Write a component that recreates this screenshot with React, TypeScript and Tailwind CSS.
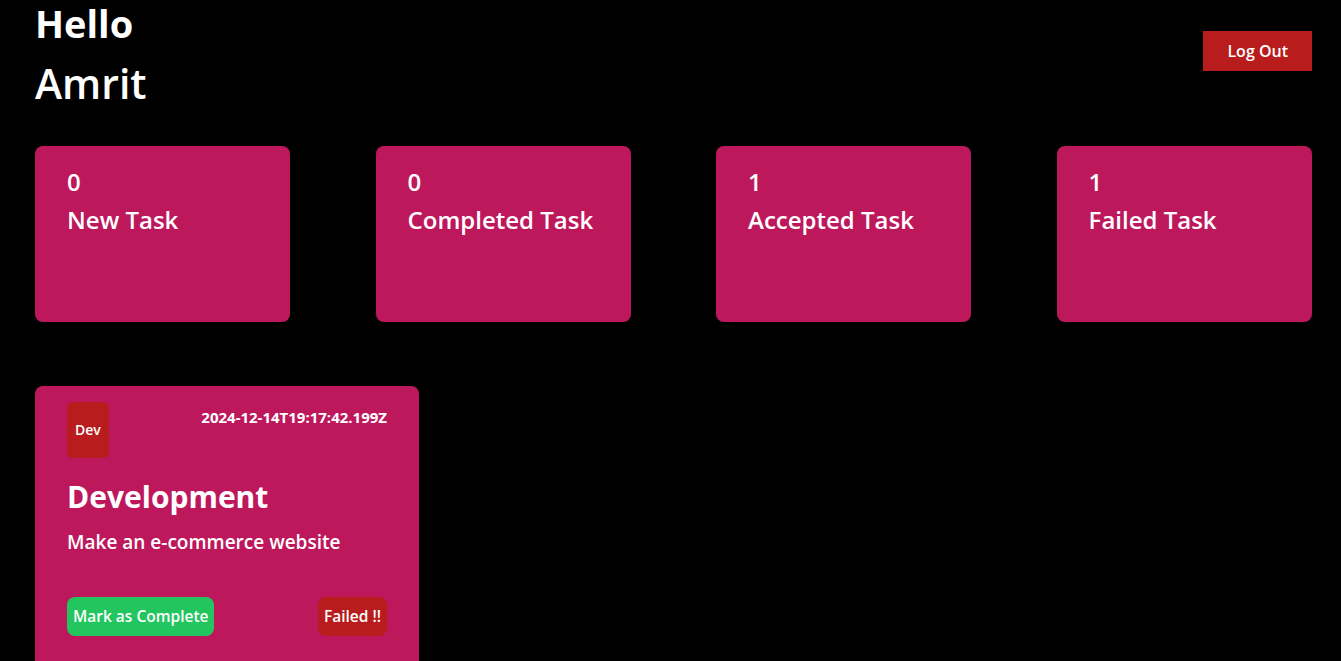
const stats = [
  { count: 0, label: "New Task" },
  { count: 0, label: "Completed Task" },
  { count: 1, label: "Accepted Task" },
  { count: 1, label: "Failed Task" },
]

function Header() {
  return (
    <div className="flex items-start justify-between">
      <h1>
        <span className="block text-[38px] font-bold leading-[46px]">Hello</span>
        <span className="mt-2 block text-[41px] font-semibold leading-[58px]">Amrit</span>
      </h1>
      <button className="mt-[31px] bg-[#b91c1c] px-6 py-2 text-base font-semibold text-white">Log Out</button>
    </div>
  )
}

function StatCard({ count, label }: { count: number; label: string }) {
  return (
    <div className="h-[176px] w-[20%] rounded-lg bg-[#be185d] px-8 pt-5">
      <h2 className="text-2xl font-semibold">{count}</h2>
      <h3 className="mt-1.5 text-2xl font-semibold">{label}</h3>
    </div>
  )
}

function TaskCard() {
  return (
    <div className="h-[300px] w-[384px] shrink-0 rounded-lg bg-[#be185d] px-8 pt-4">
      <div className="flex items-start justify-between">
        <span className="rounded-md bg-[#b91c1c] px-2 py-[18px] text-sm font-semibold">Dev</span>
        <span className="mt-1 text-[15px] font-bold">2024-12-14T19:17:42.199Z</span>
      </div>
      <h2 className="mt-[21px] text-3xl font-bold">Development</h2>
      <p className="mt-[13px] text-[19px] font-semibold">Make an e-commerce website</p>
      <div className="mt-10 flex items-center justify-between">
        <button className="rounded-lg bg-[#22c55e] px-1.5 py-2 text-[15.5px] font-semibold">Mark as Complete</button>
        <button className="rounded-lg bg-[#b91c1c] px-1.5 py-2 text-[15.5px] font-semibold">Failed !!</button>
      </div>
    </div>
  )
}

export default function App() {
  return (
    <div className="min-h-screen bg-black pl-[35px] pr-[29px] text-white font-['Open_Sans',sans-serif]">
      <Header />
      <div className="mt-[34px] flex justify-between">
        {stats.map((s) => (
          <StatCard key={s.label} count={s.count} label={s.label} />
        ))}
      </div>
      <div className="mt-16 flex gap-5">
        <TaskCard />
      </div>
    </div>
  )
}
